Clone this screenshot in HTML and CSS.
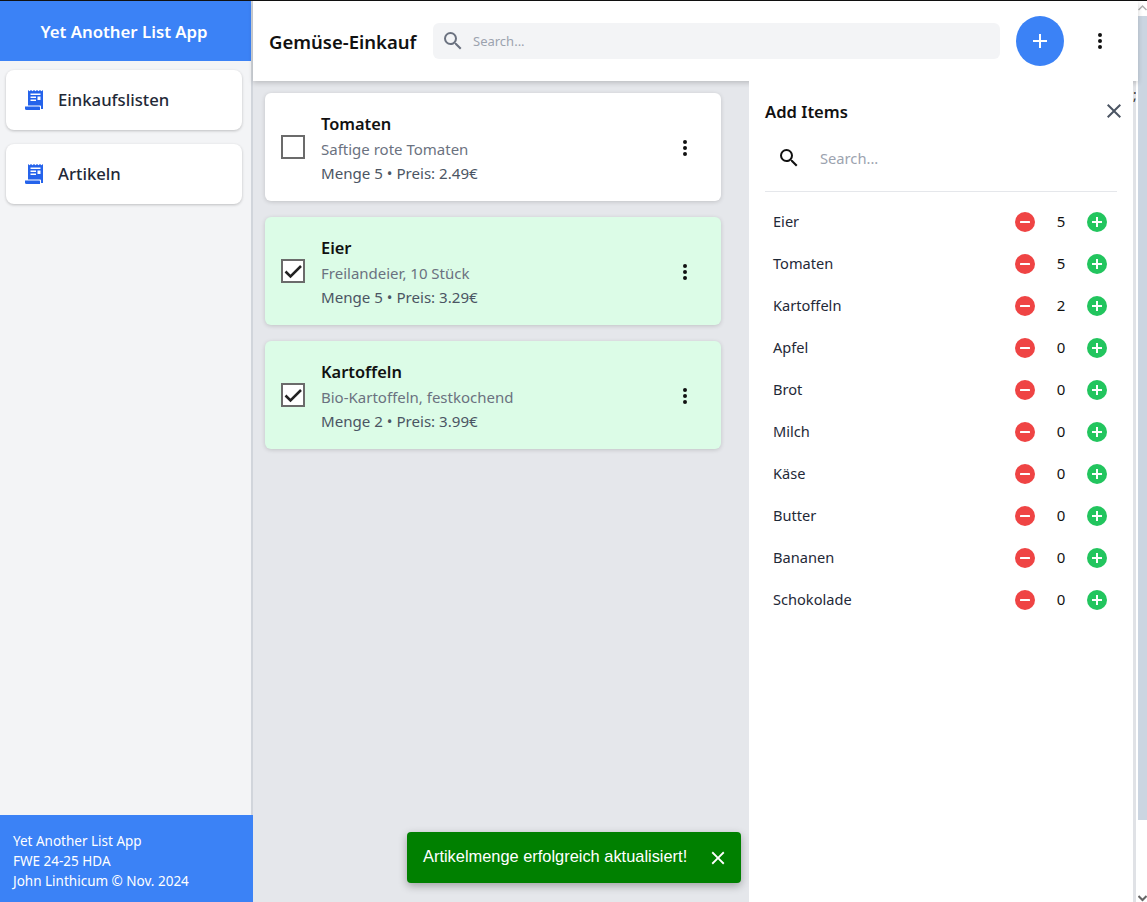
FILE: index.html
```html
<!DOCTYPE html>
<html>
<head>
<meta charset="utf-8"/>
<title>Yet Another List App</title>
<link rel="stylesheet" href="styles.css">
</head>
<body>
<svg class="defs" width="0" height="0">
  <symbol id="i-receipt" viewBox="0 0 18 20">
    <path fill="currentColor" fill-rule="evenodd" d="M3 0l1.500 1.200L6 0l1.500 1.200L9 0l1.500 1.200L12 0l1.500 1.200L15 0l1.500 1.200L18 0v19h-2v-2.500c0-.6-.5-1-1-1H3zM5.500 3.500V5h10V3.500zm0 3V8H11V6.500zm7 0V10h3V6.500zm-7 3V11H11V9.500z"/>
    <path fill="currentColor" d="M0 16.500h14c.6 0 1 .4 1 1V20H1.500A1.500 1.500 0 0 1 0 18.500z"/>
  </symbol>
  <symbol id="i-dots" viewBox="0 0 24 24">
    <path fill="currentColor" d="M12 8a2 2 0 1 0 0-4 2 2 0 0 0 0 4zm0 2a2 2 0 1 0 0 4 2 2 0 0 0 0-4zm0 6a2 2 0 1 0 0 4 2 2 0 0 0 0-4z"/>
  </symbol>
  <symbol id="i-search" viewBox="0 0 24 24">
    <path fill="currentColor" d="M15.500 14h-.79l-.28-.27A6.470 6.470 0 0 0 16 9.500 6.500 6.500 0 1 0 9.500 16c1.610 0 3.090-.59 4.230-1.570l.27.28v.79l5 4.990L20.490 19l-4.990-5zm-6 0C7.010 14 5 11.990 5 9.500S7.010 5 9.500 5 14 7.010 14 9.500 11.990 14 9.500 14z"/>
  </symbol>
  <symbol id="i-close" viewBox="0 0 24 24">
    <path fill="currentColor" d="M19 6.410L17.590 5 12 10.590 6.410 5 5 6.410 10.590 12 5 17.590 6.410 19 12 13.410 17.590 19 19 17.590 13.410 12z"/>
  </symbol>
  <symbol id="i-minus" viewBox="0 0 20 20">
    <circle cx="10" cy="10" r="10" fill="#ef4444"/>
    <rect x="5" y="9" width="10" height="2" rx=".5" fill="#fff"/>
  </symbol>
  <symbol id="i-plus" viewBox="0 0 20 20">
    <circle cx="10" cy="10" r="10" fill="#22c55e"/>
    <path fill="#fff" d="M9 5h2v4h4v2h-4v4H9v-4H5V9h4z"/>
  </symbol>
  <symbol id="i-check" viewBox="0 0 20 20">
    <path fill="none" stroke="currentColor" stroke-width="2.500" d="M2.500 10.500l5 5L18 5"/>
  </symbol>
</svg>

<div class="app">
  <aside class="sidebar">
    <div class="brand">Yet Another List App</div>
    <nav class="nav">
      <a class="nav-card"><svg class="nav-icon"><use href="#i-receipt"/></svg>Einkaufslisten</a>
      <a class="nav-card"><svg class="nav-icon"><use href="#i-receipt"/></svg>Artikeln</a>
    </nav>
    <footer class="side-foot">
      <div>Yet Another List App</div>
      <div>FWE 24-25 HDA</div>
      <div>John Linthicum © Nov. 2024</div>
    </footer>
  </aside>

  <main class="main">
    <header class="topbar">
      <h1 class="page-title">Gemüse-Einkauf</h1>
      <div class="top-search">
        <svg class="top-search-icon"><use href="#i-search"/></svg>
        <span class="placeholder">Search...</span>
      </div>
      <button class="fab"><svg width="24" height="24" viewBox="0 0 24 24"><path fill="none" stroke="#fff" stroke-width="2" d="M12 5v14M5 12h14"/></svg></button>
      <svg class="top-menu"><use href="#i-dots"/></svg>
    </header>

    <div class="body">
      <section class="list">
        <article class="item">
          <span class="box"></span>
          <div class="item-text">
            <div class="item-name">Tomaten</div>
            <div class="item-desc">Saftige rote Tomaten</div>
            <div class="item-meta">Menge 5 • Preis: 2.49€</div>
          </div>
          <svg class="item-menu"><use href="#i-dots"/></svg>
        </article>
        <article class="item done">
          <span class="box"><svg class="tick"><use href="#i-check"/></svg></span>
          <div class="item-text">
            <div class="item-name">Eier</div>
            <div class="item-desc">Freilandeier, 10 Stück</div>
            <div class="item-meta">Menge 5 • Preis: 3.29€</div>
          </div>
          <svg class="item-menu"><use href="#i-dots"/></svg>
        </article>
        <article class="item done">
          <span class="box"><svg class="tick"><use href="#i-check"/></svg></span>
          <div class="item-text">
            <div class="item-name">Kartoffeln</div>
            <div class="item-desc">Bio-Kartoffeln, festkochend</div>
            <div class="item-meta">Menge 2 • Preis: 3.99€</div>
          </div>
          <svg class="item-menu"><use href="#i-dots"/></svg>
        </article>
      </section>

      <section class="panel">
        <div class="panel-head">
          <h2 class="panel-title">Add Items</h2>
          <svg class="panel-close"><use href="#i-close"/></svg>
        </div>
        <div class="panel-search">
          <svg class="panel-search-icon"><use href="#i-search"/></svg>
          <span class="placeholder">Search...</span>
        </div>
        <ul class="picks">
          <li class="pick"><span class="pick-name">Eier</span><svg class="step"><use href="#i-minus"/></svg><span class="count">5</span><svg class="step"><use href="#i-plus"/></svg></li>
          <li class="pick"><span class="pick-name">Tomaten</span><svg class="step"><use href="#i-minus"/></svg><span class="count">5</span><svg class="step"><use href="#i-plus"/></svg></li>
          <li class="pick"><span class="pick-name">Kartoffeln</span><svg class="step"><use href="#i-minus"/></svg><span class="count">2</span><svg class="step"><use href="#i-plus"/></svg></li>
          <li class="pick"><span class="pick-name">Apfel</span><svg class="step"><use href="#i-minus"/></svg><span class="count">0</span><svg class="step"><use href="#i-plus"/></svg></li>
          <li class="pick"><span class="pick-name">Brot</span><svg class="step"><use href="#i-minus"/></svg><span class="count">0</span><svg class="step"><use href="#i-plus"/></svg></li>
          <li class="pick"><span class="pick-name">Milch</span><svg class="step"><use href="#i-minus"/></svg><span class="count">0</span><svg class="step"><use href="#i-plus"/></svg></li>
          <li class="pick"><span class="pick-name">Käse</span><svg class="step"><use href="#i-minus"/></svg><span class="count">0</span><svg class="step"><use href="#i-plus"/></svg></li>
          <li class="pick"><span class="pick-name">Butter</span><svg class="step"><use href="#i-minus"/></svg><span class="count">0</span><svg class="step"><use href="#i-plus"/></svg></li>
          <li class="pick"><span class="pick-name">Bananen</span><svg class="step"><use href="#i-minus"/></svg><span class="count">0</span><svg class="step"><use href="#i-plus"/></svg></li>
          <li class="pick"><span class="pick-name">Schokolade</span><svg class="step"><use href="#i-minus"/></svg><span class="count">0</span><svg class="step"><use href="#i-plus"/></svg></li>
        </ul>
      </section>
      <div class="inner-scroll">;</div>
    </div>
  </main>

  <div class="page-scroll">
    <svg class="scroll-arrow scroll-up" width="9" height="8" viewBox="0 0 9 8"><path fill="none" stroke="#b0b0b0" stroke-width="1.500" d="M.5 6l4-4 4 4"/></svg>
    <div class="scroll-thumb"></div>
    <svg class="scroll-arrow scroll-down" width="9" height="8" viewBox="0 0 9 8"><path fill="none" stroke="#666" stroke-width="2" d="M.5 2l4 4 4-4"/></svg>
  </div>
</div>

<div class="toast">
  <span>Artikelmenge erfolgreich aktualisiert!</span>
  <svg class="toast-close"><use href="#i-close"/></svg>
</div>
</body>
</html>
```

FILE: styles.css
```css
* {
  box-sizing: border-box;
}

html, body {
  margin: 0;
  height: 100%;
  overflow: hidden;
}

body {
  font-family: "Noto Sans", "Open Sans", sans-serif;
  color: #1f2937;
  background-color: #fff;
  font-size: 14px;
}

.defs {
  position: absolute;
}

.app {
  display: flex;
  height: 100%;
  border-top: 1px solid #111;
}

/* sidebar */
.sidebar {
  width: 253px;
  flex: none;
  display: flex;
  flex-direction: column;
  background-color: #f3f4f6;
  border-right: 2px solid #d1d5db;
}

.brand {
  height: 60px;
  display: flex;
  align-items: center;
  justify-content: center;
  padding-right: 3px;
  background-color: #3b82f6;
  color: #fff;
  font-size: 16.800px;
  font-weight: 600;
}

.nav {
  flex: 1;
  display: flex;
  flex-direction: column;
  gap: 14px;
  padding: 9px 9px 0 6px;
}

.nav-card {
  height: 60px;
  display: flex;
  align-items: center;
  gap: 15px;
  padding: 0 0 2px 19px;
  background-color: #fff;
  border-radius: 8px;
  box-shadow: 0 1px 3px rgba(0, 0, 0, .22);
  font-size: 16.700px;
  font-weight: 500;
}

.nav-icon {
  width: 18px;
  height: 20px;
  margin-top: 2px;
  color: #2563eb;
}

.side-foot {
  height: 87px;
  margin-right: -2px;
  padding: 16px 13px 0;
  background-color: #3b82f6;
  color: #fff;
  font-size: 13.500px;
  line-height: 20px;
}

/* main */
.main {
  flex: 1;
  min-width: 0;
  display: flex;
  flex-direction: column;
}

.topbar {
  height: 80px;
  flex: none;
  position: relative;
  z-index: 2;
  display: flex;
  align-items: center;
  padding: 0 0 0 16px;
  background-color: #fff;
  box-shadow: 0 2px 5px rgba(0, 0, 0, .18);
}

.page-title {
  margin: 0;
  width: 164px;
  flex: none;
  color: #111;
  font-size: 18.500px;
  font-weight: 600;
}

.top-search {
  width: 567px;
  height: 36px;
  display: flex;
  align-items: center;
  gap: 8px;
  padding-left: 8px;
  background-color: #f3f4f6;
  border-radius: 6px;
}

.top-search-icon {
  width: 24px;
  height: 24px;
  color: #6b7280;
}

.placeholder {
  color: #9ca3af;
  font-size: 13px;
}

.fab {
  width: 48px;
  height: 50px;
  margin-left: 16px;
  display: flex;
  align-items: center;
  justify-content: center;
  padding: 0;
  border: 0;
  border-radius: 50%;
  background-color: #3b82f6;
}

.top-menu {
  width: 24px;
  height: 24px;
  margin-left: 24px;
  color: #111;
}

.body {
  flex: 1;
  min-height: 0;
  display: flex;
}

.list {
  width: 496px;
  flex: none;
  display: flex;
  flex-direction: column;
  gap: 16px;
  padding: 12px 28px 0 12px;
  background-color: #e5e7eb;
}

.item {
  height: 108px;
  display: flex;
  align-items: center;
  padding: 0 24px 0 16px;
  background-color: #fff;
  border-radius: 6px;
  box-shadow: 0 1px 4px rgba(0, 0, 0, .16);
}

.item.done {
  background-color: #dcfce7;
}

.box {
  width: 24px;
  height: 24px;
  flex: none;
  display: flex;
  align-items: center;
  justify-content: center;
  background-color: #fff;
  border: 2px solid #6b6b6b;
  color: #222;
}

.tick {
  width: 20px;
  height: 20px;
}

.item-text {
  flex: 1;
  margin-left: 16px;
  padding-top: 3px;
  line-height: 24px;
}

.item-name {
  margin-bottom: 1px;
  color: #111;
  font-size: 16.400px;
  font-weight: 600;
}

.item-desc {
  color: #6b7280;
  font-size: 15px;
}

.item-meta {
  color: #4b5563;
  font-size: 15.100px;
}

.item-menu {
  width: 24px;
  height: 24px;
  margin-top: 2px;
  color: #111;
}

/* add items panel */
.panel {
  width: 384px;
  flex: none;
  position: relative;
  z-index: 3;
  padding: 0 16px;
  background-color: #fff;
}

.panel-head {
  height: 60px;
  display: flex;
  align-items: center;
  justify-content: space-between;
}

.panel-title {
  margin: 0;
  color: #111;
  font-size: 16.600px;
  font-weight: 600;
}

.panel-close {
  width: 24px;
  height: 24px;
  margin-right: -9px;
  color: #4b5563;
}

.panel-search {
  height: 51px;
  display: flex;
  align-items: center;
  gap: 19px;
  padding: 0 0 16px 12px;
  border-bottom: 1px solid #e5e7eb;
  margin-bottom: 8px;
}

.panel-search-icon {
  width: 24px;
  height: 24px;
  color: #111;
}

.panel-search .placeholder {
  font-size: 14.700px;
}

.picks {
  margin: 0;
  padding: 0;
  list-style: none;
}

.pick {
  height: 42px;
  display: flex;
  align-items: center;
  padding: 0 10px 0 8px;
  color: #1f2937;
  font-size: 14.600px;
}

.pick-name {
  flex: 1;
}

.step {
  width: 20px;
  height: 20px;
  margin-top: 2px;
}

.count {
  width: 52px;
  text-align: center;
  color: #111;
  font-size: 15px;
}

.inner-scroll {
  width: 3px;
  flex: none;
  padding-top: 4px;
  overflow: hidden;
  background-color: #e0e2e6;
  color: #333;
  font-size: 14px;
  line-height: 20px;
}

.page-scroll {
  width: 9px;
  flex: none;
  background-color: #fff;
}

.scroll-arrow {
  display: block;
}

.scroll-up {
  margin-top: 3px;
}

.scroll-thumb {
  height: 804px;
  margin-top: 4px;
  background-color: #cbd5e1;
}

.scroll-down {
  margin-top: 74px;
}

/* toast */
.toast {
  position: absolute;
  left: 407px;
  top: 832px;
  width: 334px;
  height: 51px;
  display: flex;
  align-items: center;
  justify-content: space-between;
  padding: 0 12px 2px 16px;
  background-color: #008000;
  border-radius: 4px;
  box-shadow: 0 3px 8px rgba(0, 0, 0, .3);
  color: #fff;
  font-family: "Liberation Sans", Arial, sans-serif;
  font-size: 16.400px;
}

.toast-close {
  width: 22px;
  height: 22px;
  margin-top: 2px;
}
```
